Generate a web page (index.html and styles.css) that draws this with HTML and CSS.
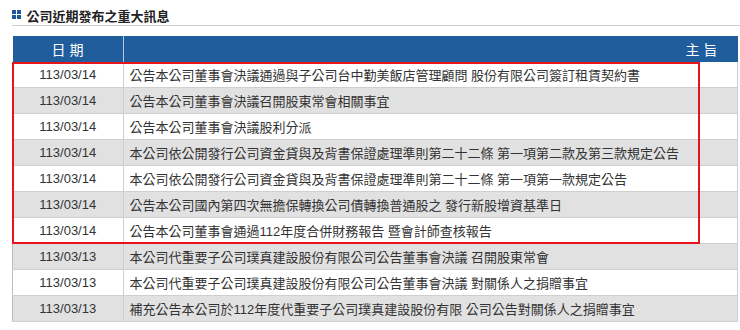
FILE: index.html
```html
<!DOCTYPE html>
<html>
<head>
<meta charset="utf-8">
<link rel="stylesheet" href="styles.css">
</head>
<body>
<div class="page">
  <div class="title">
    <span class="icon"><i></i><i></i><i></i><i></i></span>
    <h2>公司近期發布之重大訊息</h2>
  </div>
  <div class="table-wrap">
    <table class="news">
      <thead>
        <tr><th class="c-date">日 期</th><th class="c-subj">主 旨</th></tr>
      </thead>
      <tbody>
        <tr><td class="c-date">113/03/14</td><td>公告本公司董事會決議通過與子公司台中勤美飯店管理顧問 股份有限公司簽訂租賃契約書</td></tr>
        <tr><td class="c-date">113/03/14</td><td>公告本公司董事會決議召開股東常會相關事宜</td></tr>
        <tr><td class="c-date">113/03/14</td><td>公告本公司董事會決議股利分派</td></tr>
        <tr><td class="c-date">113/03/14</td><td>本公司依公開發行公司資金貸與及背書保證處理準則第二十二條 第一項第二款及第三款規定公告</td></tr>
        <tr><td class="c-date">113/03/14</td><td>本公司依公開發行公司資金貸與及背書保證處理準則第二十二條 第一項第一款規定公告</td></tr>
        <tr><td class="c-date">113/03/14</td><td>公告本公司國內第四次無擔保轉換公司債轉換普通股之 發行新股增資基準日</td></tr>
        <tr><td class="c-date">113/03/14</td><td>公告本公司董事會通過112年度合併財務報告 暨會計師查核報告</td></tr>
        <tr><td class="c-date">113/03/13</td><td>本公司代重要子公司璞真建設股份有限公司公告董事會決議 召開股東常會</td></tr>
        <tr><td class="c-date">113/03/13</td><td>本公司代重要子公司璞真建設股份有限公司公告董事會決議 對關係人之捐贈事宜</td></tr>
        <tr><td class="c-date">113/03/13</td><td>補充公告本公司於112年度代重要子公司璞真建設股份有限 公司公告對關係人之捐贈事宜</td></tr>
      </tbody>
    </table>
    <div class="highlight"></div>
  </div>
</div>
</body>
</html>
```

FILE: styles.css
```css
html, body {
  margin: 0;
  padding: 0;
  background: #ffffff;
}
.page {
  width: 740px;
  height: 330px;
  box-sizing: border-box;
  padding: 5px 0 0 12px;
  overflow: hidden;
  font-family: "Liberation Sans", "Noto Sans CJK TC", sans-serif;
  color: #333333;
}
.title {
  display: flex;
  align-items: center;
  gap: 6px;
  height: 20px;
  border-bottom: 1px solid #d0d0d0;
}
.icon {
  display: grid;
  grid-template-columns: 3.5px 3.5px;
  grid-template-rows: 3.5px 3.5px;
  gap: 1.5px;
  margin-top: -1px;
}
.icon i {
  display: block;
  background: #1d5a9a;
}
.title h2 {
  margin: 0;
  font-size: 13px;
  font-weight: bold;
  color: #222222;
}
.table-wrap {
  position: relative;
  margin-top: 10px;
  width: 726px;
}
.news {
  width: 100%;
  border-collapse: collapse;
  font-size: 13px;
  table-layout: fixed;
}
.news th {
  background: #1f5d9c;
  color: #ffffff;
  font-weight: normal;
  height: 26px;
  padding: 0;
  font-size: 14px;
  border-right: 1px solid #b8c8dc;
}
.news th:last-child {
  border-right: none;
}
.news th.c-date {
  width: 110px;
  text-align: center;
}
.news th.c-subj {
  text-align: right;
  padding-right: 20px;
}
.news td {
  height: 25px;
  padding: 0 0 0 6px;
  border: 1px solid #cfcfcf;
  border-top: none;
  white-space: nowrap;
  overflow: hidden;
  color: #333333;
}
.news td.c-date {
  text-align: center;
  padding: 0;
  border-left: 1px solid #bdbdbd;
}
.news tbody tr:nth-child(even) td {
  background: #e1e1e1;
}
.highlight {
  position: absolute;
  left: 0;
  top: 26px;
  width: 688px;
  height: 182px;
  border: 2px solid #e8141c;
  box-sizing: border-box;
  pointer-events: none;
}
```
